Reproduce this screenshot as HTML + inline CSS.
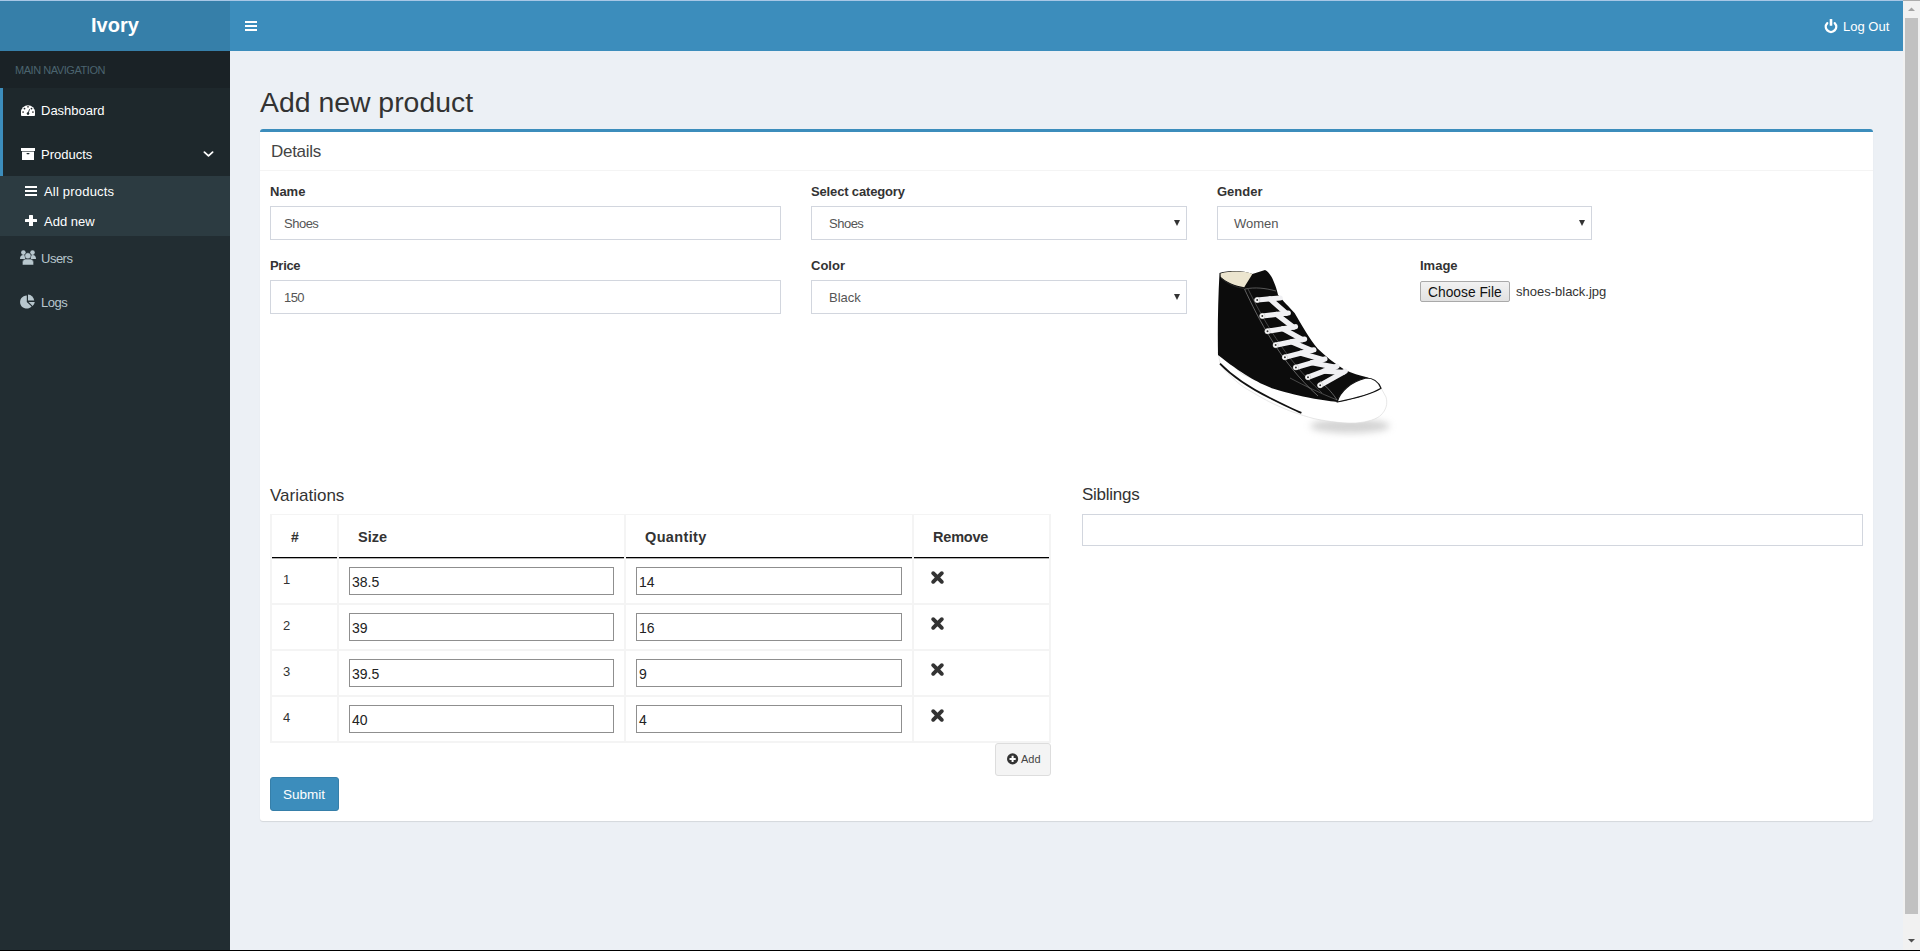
<!DOCTYPE html>
<html><head><meta charset="utf-8"><title>Add new product</title>
<style>
html,body{margin:0;padding:0;width:1920px;height:951px;overflow:hidden;background:#ecf0f5;font-family:"Liberation Sans",sans-serif;}
.a{position:absolute;}
.t{position:absolute;white-space:pre;line-height:1;}
svg{position:absolute;overflow:visible;}
#topline{left:0;top:0;width:1903px;height:1px;background:#a8c7e6;}
#botline{left:0;top:950px;width:1920px;height:1px;background:#000;}
#logo{left:0;top:1px;width:230px;height:50px;background:#367fa9;}
#nav{left:230px;top:1px;width:1673px;height:50px;background:#3c8dbc;}
#side{left:0;top:51px;width:230px;height:899px;background:#222d32;}
#sbhead{left:0;top:51px;width:230px;height:37px;background:#1a2226;}
#act{left:0;top:88px;width:230px;height:88px;background:#1e282c;}
#actb{left:0;top:88px;width:3px;height:88px;background:#3c8dbc;}
#tree{left:0;top:176px;width:230px;height:60px;background:#2c3b41;}
#sb{left:1903px;top:0;width:17px;height:950px;background:#f1f1f1;}
#thumb{left:1905px;top:18px;width:13px;height:896px;background:#c1c1c1;}
#box{left:260px;top:129px;width:1613px;height:692px;background:#fff;border-radius:3px;box-shadow:0 1px 1px rgba(0,0,0,.1);}
#boxtop{left:260px;top:129px;width:1613px;height:3px;background:#3c8dbc;border-radius:3px 3px 0 0;}
#boxsep{left:260px;top:170px;width:1613px;height:1px;background:#f4f4f4;}
.fc{position:absolute;box-sizing:border-box;border:1px solid #d2d6de;background:#fff;}
.lbl{font-weight:700;font-size:13px;color:#333;}
.val{font-size:13px;color:#555;}
.tb{position:absolute;background:#f4f4f4;}
.inp{position:absolute;box-sizing:border-box;border:1px solid #8f8f8f;background:#fff;width:266px;height:28px;}
.iv{position:absolute;white-space:pre;line-height:1;font-size:14px;color:#222;}
.rn{position:absolute;white-space:pre;line-height:1;font-size:13px;color:#333;}
.th{position:absolute;white-space:pre;line-height:1;font-size:14.5px;font-weight:700;color:#333;}
.arr{position:absolute;width:0;height:0;border-left:3px solid transparent;border-right:3px solid transparent;border-top:6px solid #333;}
</style></head><body>
<div class="a" id="topline"></div>
<div class="a" id="logo"></div>
<div class="a" id="nav"></div>
<div class="a" id="side"></div>
<div class="a" id="sbhead"></div>
<div class="a" id="act"></div>
<div class="a" id="actb"></div>
<div class="a" id="tree"></div>
<div class="a" id="sb"></div>
<div class="a" id="thumb"></div>
<div class="a" style="left:1903px;top:0;width:17px;height:1px;background:#acacac;"></div>
<!-- scrollbar arrows -->
<svg style="left:1903px;top:0" width="17" height="17"><path d="M5 11 L8.5 7.5 L12 11 Z" fill="#a3a3a3"/></svg>
<svg style="left:1903px;top:933px" width="17" height="17"><path d="M5 6 L8.5 9.5 L12 6 Z" fill="#505050"/></svg>
<div class="a" id="botline"></div>

<!-- header -->
<div class="t" style="left:91px;top:15px;font-size:20px;font-weight:700;color:#fff;">Ivory</div>
<svg style="left:245px;top:21px" width="12" height="10"><rect x="0" y="0" width="12" height="2" fill="#fff"/><rect x="0" y="4" width="12" height="2" fill="#fff"/><rect x="0" y="8" width="12" height="2" fill="#fff"/></svg>
<svg style="left:1824px;top:18px" width="14" height="15" viewBox="0 0 14 15"><path d="M3.2 5.2 A5.2 5.2 0 1 0 10.8 5.2" fill="none" stroke="#fff" stroke-width="2.4" stroke-linecap="round"/><rect x="5.7" y="1" width="2.6" height="6.8" rx="0.6" fill="#fff"/></svg>
<div class="t" style="left:1843px;top:20px;font-size:13px;color:#fff;">Log Out</div>

<!-- sidebar -->
<div class="t" style="left:15px;top:65px;font-size:11px;color:#4b646f;letter-spacing:-0.45px;">MAIN NAVIGATION</div>
<svg style="left:21px;top:105px" width="14" height="11" viewBox="0 0 14 11"><path d="M0.8 11 Q0 11 0 10 L0 7.2 A7 7 0 0 1 14 7.2 L14 10 Q14 11 13.2 11 Z" fill="#fff"/><circle cx="3.5" cy="3.6" r="0.9" fill="#1e282c"/><rect x="6.2" y="1" width="1.6" height="1.6" fill="#555"/><circle cx="10.5" cy="3.6" r="0.9" fill="#1e282c"/><rect x="1.3" y="6.3" width="1.6" height="1.6" fill="#555"/><rect x="11.1" y="6.3" width="1.6" height="1.6" fill="#555"/><circle cx="7" cy="8.6" r="1.3" fill="#1e282c"/><path d="M7 8.6 L8.6 4.2" stroke="#1e282c" stroke-width="0.9"/></svg>
<div class="t" style="left:41px;top:104px;font-size:13px;color:#fff;">Dashboard</div>
<svg style="left:21px;top:148px" width="14" height="12" viewBox="0 0 14 12"><rect x="0" y="0" width="14" height="3" fill="#fff"/><rect x="1" y="3.6" width="12" height="8.4" fill="#fff"/><rect x="5.5" y="5" width="3" height="1.2" rx="0.6" fill="#1e282c"/></svg>
<div class="t" style="left:41px;top:148px;font-size:13px;color:#fff;">Products</div>
<svg style="left:203px;top:150px" width="11" height="8" viewBox="0 0 11 8"><path d="M1.4 2.2 L5.5 5.9 L9.6 2.2" fill="none" stroke="#fff" stroke-width="1.8" stroke-linecap="round" stroke-linejoin="round"/></svg>
<svg style="left:25px;top:186px" width="12" height="10"><rect x="0" y="0" width="12" height="2" fill="#fff"/><rect x="0" y="4" width="12" height="2" fill="#fff"/><rect x="0" y="8" width="12" height="2" fill="#fff"/></svg>
<div class="t" style="left:44px;top:185px;font-size:13px;color:#fff;letter-spacing:0.2px;">All products</div>
<svg style="left:25px;top:215px" width="12" height="11"><rect x="4" y="0" width="4" height="11" rx="0.5" fill="#fff"/><rect x="0" y="4" width="12" height="3" rx="0.5" fill="#fff"/></svg>
<div class="t" style="left:44px;top:215px;font-size:13px;color:#fff;">Add new</div>
<svg style="left:20px;top:250px" width="16" height="15" viewBox="0 0 16 15"><circle cx="3.4" cy="2.6" r="2.3" fill="#b8c7ce"/><circle cx="12.5" cy="2.6" r="2.3" fill="#b8c7ce"/><path d="M0 9 Q0 5 3.4 5 Q5.2 5 6 6.5 L5 9 Z" fill="#b8c7ce"/><path d="M16 9 Q16 5 12.6 5 Q10.8 5 10 6.5 L11 9 Z" fill="#b8c7ce"/><circle cx="7.9" cy="5.8" r="3.1" fill="#b8c7ce" stroke="#222d32" stroke-width="0.5"/><path d="M2.4 15 L2.4 12.6 Q2.4 9.1 5.6 9.1 L10.3 9.1 Q13.6 9.1 13.6 12.6 L13.6 15 Z" fill="#b8c7ce" stroke="#222d32" stroke-width="0.5"/></svg>
<div class="t" style="left:41px;top:252px;font-size:13px;color:#b8c7ce;letter-spacing:-0.5px;">Users</div>
<svg style="left:20px;top:294px" width="16" height="15" viewBox="0 0 16 15"><path d="M6.8 1.4 L6.8 8 L11.6 12.4 A6.6 6.6 0 1 1 6.8 1.4 Z" fill="#b8c7ce"/><path d="M8 0.6 A6.4 6.4 0 0 1 14.2 6.6 L8 6.6 Z" fill="#b8c7ce"/><path d="M8.6 8 L14.8 8 A6.6 6.6 0 0 1 12.6 12 Z" fill="#b8c7ce"/></svg>
<div class="t" style="left:41px;top:296px;font-size:13px;color:#b8c7ce;letter-spacing:-0.5px;">Logs</div>

<!-- content -->
<div class="t" style="left:260px;top:88px;font-size:28.4px;color:#333;">Add new product</div>
<div class="a" id="box"></div>
<div class="a" id="boxtop"></div>
<div class="a" id="boxsep"></div>
<div class="t" style="left:271px;top:143px;font-size:17px;color:#444;letter-spacing:-0.3px;">Details</div>

<div class="t lbl" style="left:270px;top:185px;">Name</div>
<div class="fc" style="left:270px;top:206px;width:511px;height:34px;"></div>
<div class="t val" style="left:284px;top:217px;letter-spacing:-0.5px;">Shoes</div>

<div class="t lbl" style="left:811px;top:185px;letter-spacing:-0.15px;">Select category</div>
<div class="fc" style="left:811px;top:206px;width:376px;height:34px;"></div>
<div class="t val" style="left:829px;top:217px;letter-spacing:-0.5px;">Shoes</div>
<div class="arr" style="left:1174px;top:220px;"></div>

<div class="t lbl" style="left:1217px;top:185px;">Gender</div>
<div class="fc" style="left:1217px;top:206px;width:375px;height:34px;"></div>
<div class="t val" style="left:1234px;top:217px;">Women</div>
<div class="arr" style="left:1579px;top:220px;"></div>

<div class="t lbl" style="left:270px;top:259px;letter-spacing:-0.3px;">Price</div>
<div class="fc" style="left:270px;top:280px;width:511px;height:34px;"></div>
<div class="t val" style="left:284px;top:291px;letter-spacing:-0.6px;">150</div>

<div class="t lbl" style="left:811px;top:259px;">Color</div>
<div class="fc" style="left:811px;top:280px;width:376px;height:34px;"></div>
<div class="t val" style="left:829px;top:291px;">Black</div>
<div class="arr" style="left:1174px;top:294px;"></div>

<div class="t lbl" style="left:1420px;top:259px;">Image</div>
<div class="a" style="left:1420px;top:281px;width:90px;height:21px;box-sizing:border-box;border:1px solid #a9a9a9;border-radius:2px;background:linear-gradient(#f2f2f2,#e1e1e1);"></div>
<div class="t" style="left:1428px;top:285.5px;font-size:13.8px;color:#111;">Choose File</div>
<div class="t" style="left:1516px;top:285px;font-size:13px;color:#333;">shoes-black.jpg</div>

<!-- SHOE -->
<svg style="left:0;top:0" width="1920" height="951">
<defs><filter id="blur" x="-50%" y="-50%" width="200%" height="200%"><feGaussianBlur stdDeviation="3.5"/></filter></defs>
<ellipse cx="1350" cy="426" rx="40" ry="7" fill="#a8a8a8" opacity="0.5" filter="url(#blur)"/>
<path d="M1218 352 C1219 358 1220 363 1221 366 C1230 376 1240 386 1252 392 C1265 400 1285 411 1314 418.6 C1330 422 1345 423.5 1356 423 C1368 422 1377 419 1381 415 C1386 410 1388 404 1386 397 L1381 388 L1337 401 C1305 397 1273 389 1242 374 Z" fill="#fff" stroke="#dcdcdc" stroke-width="0.7"/>
<path d="M1219.5 273 C1230 270 1244 270.5 1252.4 274 L1265 270 C1270 272 1275 282 1278 294.8 C1282 300 1290 308 1294.6 313 C1300 322 1310 340 1317.8 348.8 C1325 356 1334 363 1345 370 C1352 373.5 1360 375.5 1366 377 C1372 379 1377 382 1381 388.3 C1370 395 1352 399.5 1337.3 402 C1320 400 1305 398 1273.6 388.8 C1258 383 1242 374 1218 355 C1217.5 330 1218 300 1219.5 273 Z" fill="#0c0c0c"/>
<path d="M1220.5 273.6 C1230 270.8 1245 271 1252.4 274 L1244.2 287.2 C1235 286 1226 282 1220.8 277 Z" fill="#ece5cf"/>
<path d="M1221 278 C1228 284 1236 287.5 1244.5 288.5" fill="none" stroke="#2a2a2a" stroke-width="1"/>
<path d="M1337.3 401.5 C1340 392 1350 382 1366 378 C1374 378 1379 383 1381 388.3 C1370 395 1350 399.5 1337.3 402 Z" fill="#fff" stroke="#151515" stroke-width="1.2"/>
<path d="M1220 363.6 C1232 376 1250 388 1270 398 C1282 404 1292 409 1301.4 412.9" fill="none" stroke="#111" stroke-width="1.8"/>
<path d="M1244.5 289 C1258 318 1280 362 1318 396" fill="none" stroke="#9c9c9c" stroke-width="0.6"/>
<path d="M1248 289 C1262 317 1284 358 1322 393" fill="none" stroke="#7c7c7c" stroke-width="0.5"/>
<path d="M1245 289 C1255 287 1265 288 1276 291" fill="none" stroke="#8a8a8a" stroke-width="0.6"/>
<path d="M1290 378 C1305 386 1320 393 1337 400" fill="none" stroke="#888" stroke-width="0.5"/>
<path d="M1320 381 C1328 388 1334 395 1337 400" fill="none" stroke="#999" stroke-width="0.6"/>
<g stroke="#f0f0f3" stroke-width="5.2" stroke-linecap="round" fill="none">
<path d="M1269.9 298.9 L1286.2 313.2"/><path d="M1276.6 314.4 L1293.3 327.1"/><path d="M1282.9 328.7 L1302.3 339.6"/><path d="M1291.5 341.8 L1311.6 350.4"/><path d="M1300.9 353.2 L1322.6 359.6"/><path d="M1311.9 362.7 L1334.7 367.1"/><path d="M1324.0 371.1 L1343.2 372.3"/>
<path d="M1257.2 300.0 L1280.2 298.0"/><path d="M1262.3 316.0 L1288.3 313.0"/><path d="M1267.5 331.2 L1295.5 326.7"/><path d="M1275.6 345.1 L1304.6 339.1"/><path d="M1284.9 357.3 L1313.9 349.8"/><path d="M1295.9 367.4 L1324.9 358.9"/><path d="M1308.0 377.2 L1337.0 366.2"/><path d="M1320.2 385.2 L1345.2 371.2"/>
</g>
<g fill="#fafafa" stroke="#aaa" stroke-width="0.4"><circle cx="1257.2" cy="300" r="2.7"/><circle cx="1262.3" cy="316" r="2.7"/><circle cx="1267.5" cy="331.2" r="2.7"/><circle cx="1275.6" cy="345.1" r="2.7"/><circle cx="1284.9" cy="357.3" r="2.7"/><circle cx="1295.9" cy="367.4" r="2.7"/><circle cx="1308" cy="377.2" r="2.7"/><circle cx="1320.2" cy="385.2" r="2.7"/></g>
<g fill="#333"><circle cx="1257.2" cy="300" r="1"/><circle cx="1262.3" cy="316" r="1"/><circle cx="1267.5" cy="331.2" r="1"/><circle cx="1275.6" cy="345.1" r="1"/><circle cx="1284.9" cy="357.3" r="1"/><circle cx="1295.9" cy="367.4" r="1"/><circle cx="1308" cy="377.2" r="1"/><circle cx="1320.2" cy="385.2" r="1"/></g>
</svg>

<!-- Variations -->
<div class="t" style="left:270px;top:487px;font-size:17px;color:#333;">Variations</div>
<div class="tb" style="left:270px;top:514px;width:781px;height:1px;"></div>
<div class="tb" style="left:270px;top:514px;width:2px;height:229px;"></div>
<div class="tb" style="left:337px;top:514px;width:2px;height:229px;"></div>
<div class="tb" style="left:624px;top:514px;width:2px;height:229px;"></div>
<div class="tb" style="left:912px;top:514px;width:2px;height:229px;"></div>
<div class="tb" style="left:1049px;top:514px;width:2px;height:229px;"></div>
<div class="tb" style="left:270px;top:603px;width:781px;height:2px;"></div>
<div class="tb" style="left:270px;top:649px;width:781px;height:2px;"></div>
<div class="tb" style="left:270px;top:695px;width:781px;height:2px;"></div>
<div class="tb" style="left:270px;top:741px;width:781px;height:2px;"></div>
<div class="a" style="left:272px;top:557px;width:65px;height:1px;background:#000;box-shadow:0 1px 0 rgba(0,0,0,0.3);"></div>
<div class="a" style="left:339px;top:557px;width:285px;height:1px;background:#000;box-shadow:0 1px 0 rgba(0,0,0,0.3);"></div>
<div class="a" style="left:626px;top:557px;width:286px;height:1px;background:#000;box-shadow:0 1px 0 rgba(0,0,0,0.3);"></div>
<div class="a" style="left:914px;top:557px;width:135px;height:1px;background:#000;box-shadow:0 1px 0 rgba(0,0,0,0.3);"></div>
<div class="th" style="left:291px;top:530px;font-size:14px;">#</div>
<div class="th" style="left:358px;top:530px;">Size</div>
<div class="th" style="left:645px;top:530px;letter-spacing:0.35px;">Quantity</div>
<div class="th" style="left:933px;top:530px;letter-spacing:-0.2px;">Remove</div>

<div class="rn" style="left:283px;top:573px;">1</div>
<div class="inp" style="left:349px;top:567px;width:265px;"></div><div class="iv" style="left:352px;top:575px;">38.5</div>
<div class="inp" style="left:636px;top:567px;"></div><div class="iv" style="left:639px;top:575px;">14</div>
<svg style="left:931px;top:571px" width="13" height="13" viewBox="0 0 13 13"><path d="M2.2 2.2 L10.8 10.8 M10.8 2.2 L2.2 10.8" stroke="#333" stroke-width="3.9" stroke-linecap="round"/></svg>

<div class="rn" style="left:283px;top:619px;">2</div>
<div class="inp" style="left:349px;top:613px;width:265px;"></div><div class="iv" style="left:352px;top:621px;">39</div>
<div class="inp" style="left:636px;top:613px;"></div><div class="iv" style="left:639px;top:621px;">16</div>
<svg style="left:931px;top:617px" width="13" height="13" viewBox="0 0 13 13"><path d="M2.2 2.2 L10.8 10.8 M10.8 2.2 L2.2 10.8" stroke="#333" stroke-width="3.9" stroke-linecap="round"/></svg>

<div class="rn" style="left:283px;top:665px;">3</div>
<div class="inp" style="left:349px;top:659px;width:265px;"></div><div class="iv" style="left:352px;top:667px;">39.5</div>
<div class="inp" style="left:636px;top:659px;"></div><div class="iv" style="left:639px;top:667px;">9</div>
<svg style="left:931px;top:663px" width="13" height="13" viewBox="0 0 13 13"><path d="M2.2 2.2 L10.8 10.8 M10.8 2.2 L2.2 10.8" stroke="#333" stroke-width="3.9" stroke-linecap="round"/></svg>

<div class="rn" style="left:283px;top:711px;">4</div>
<div class="inp" style="left:349px;top:705px;width:265px;"></div><div class="iv" style="left:352px;top:713px;">40</div>
<div class="inp" style="left:636px;top:705px;"></div><div class="iv" style="left:639px;top:713px;">4</div>
<svg style="left:931px;top:709px" width="13" height="13" viewBox="0 0 13 13"><path d="M2.2 2.2 L10.8 10.8 M10.8 2.2 L2.2 10.8" stroke="#333" stroke-width="3.9" stroke-linecap="round"/></svg>

<div class="a" style="left:995px;top:743px;width:56px;height:33px;box-sizing:border-box;background:#f4f4f4;border:1px solid #ddd;border-radius:3px;"></div>
<svg style="left:1007px;top:753px" width="12" height="12" viewBox="0 0 12 12"><circle cx="5.6" cy="5.9" r="5.6" fill="#333"/><path d="M5.6 2.8 V9 M2.5 5.9 H8.7" stroke="#fff" stroke-width="2"/></svg>
<div class="t" style="left:1021px;top:754px;font-size:11px;color:#444;">Add</div>

<div class="a" style="left:270px;top:777px;width:69px;height:34px;box-sizing:border-box;background:#3c8dbc;border:1px solid #367fa9;border-radius:3px;"></div>
<div class="t" style="left:283px;top:788px;font-size:13.5px;color:#fff;">Submit</div>

<!-- Siblings -->
<div class="t" style="left:1082px;top:486px;font-size:17px;color:#333;letter-spacing:-0.25px;">Siblings</div>
<div class="fc" style="left:1082px;top:514px;width:781px;height:32px;"></div>
</body></html>
